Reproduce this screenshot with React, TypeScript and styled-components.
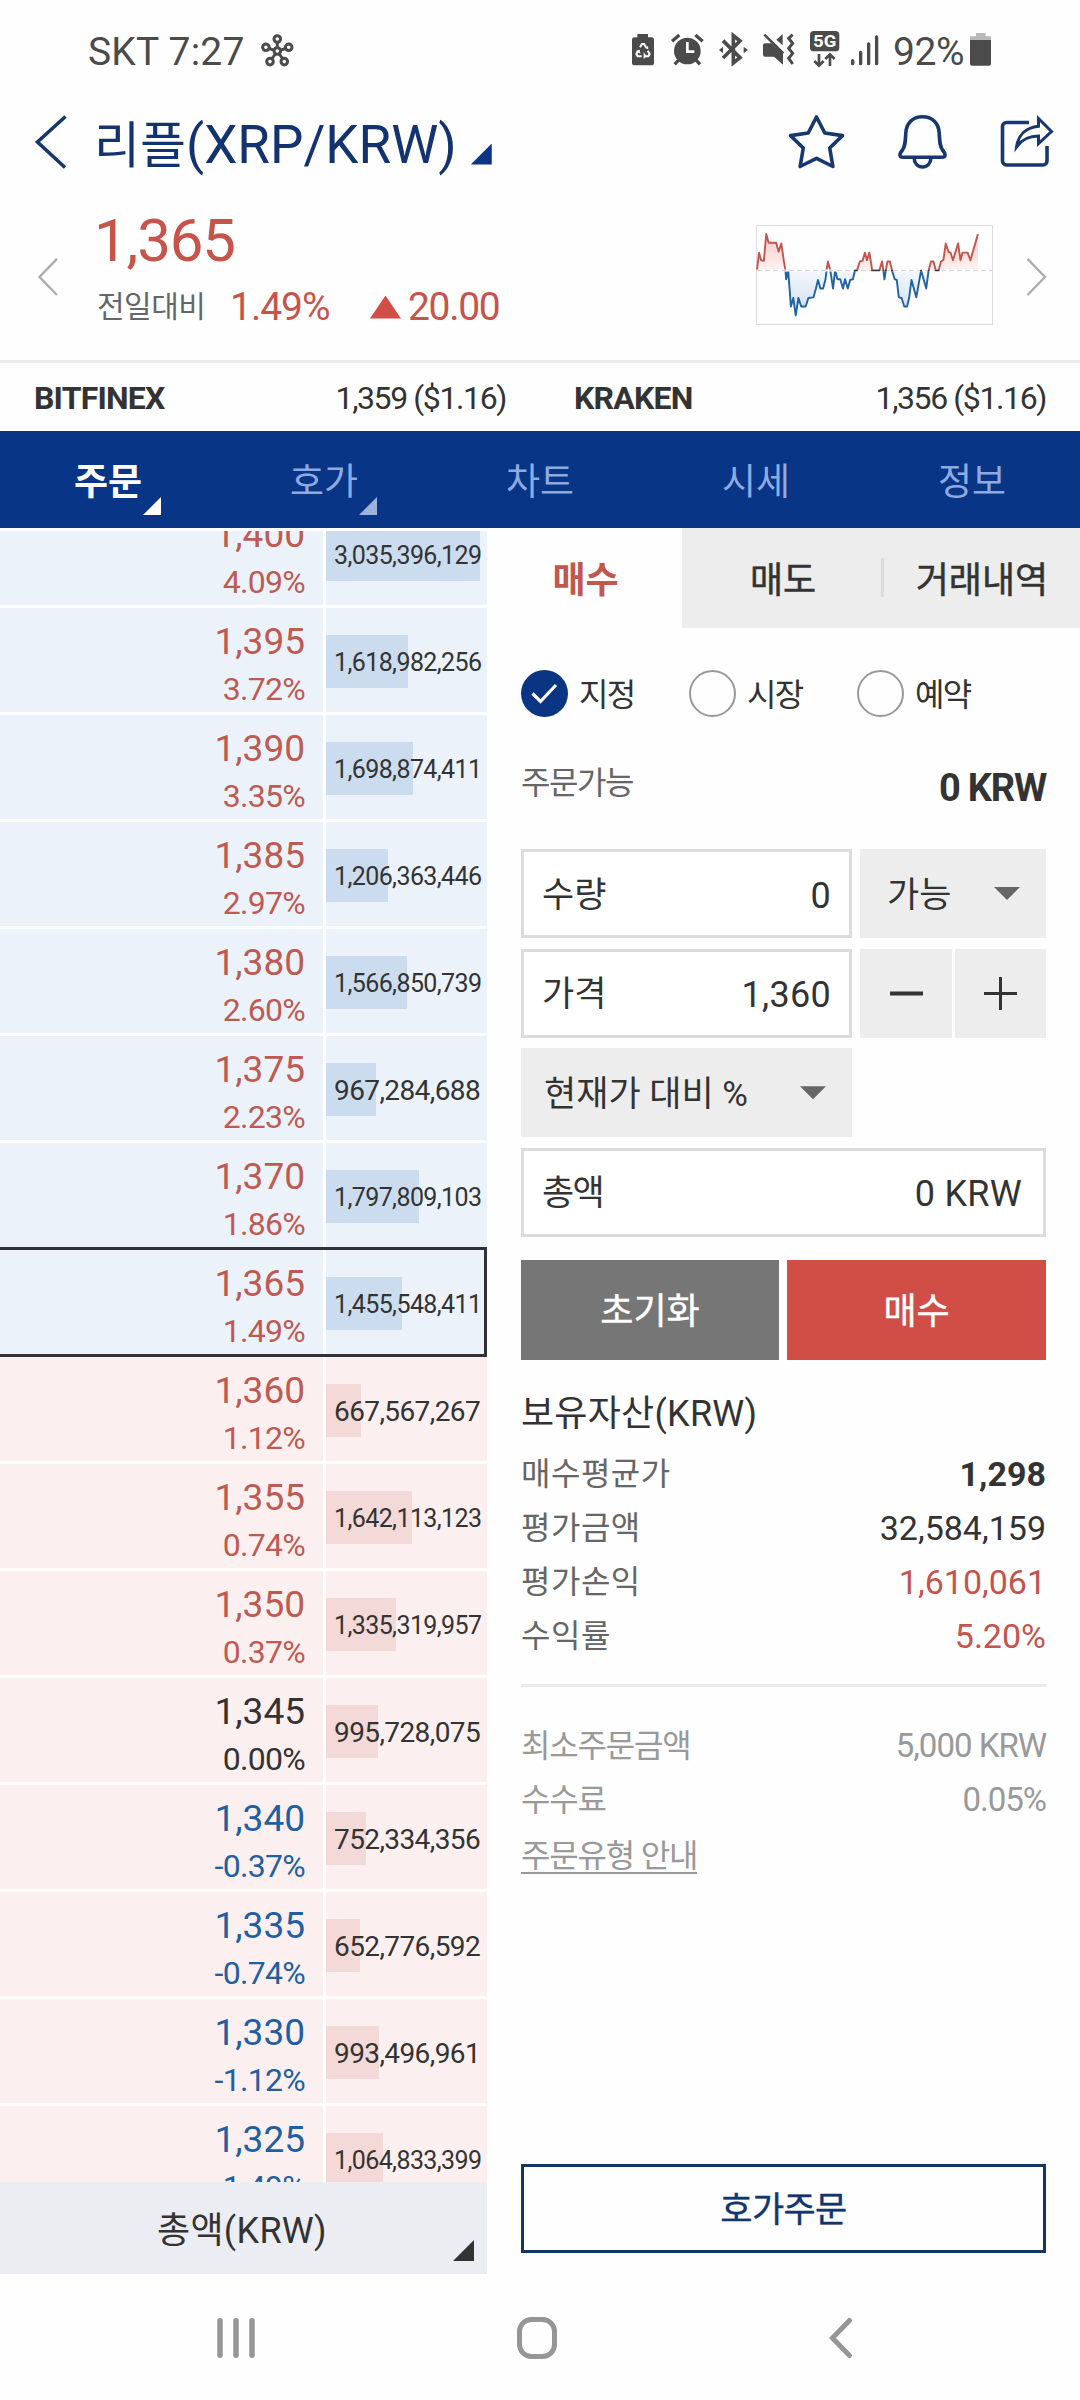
import React from "react";
import styled, { createGlobalStyle } from "styled-components";

const NAVY = "#0b3583";
const INK = "#333333";
const RED = "#c4554c";
const BLUE = "#1f5fa3";

const GlobalStyle = createGlobalStyle`
  * { box-sizing: border-box; }
  body {
    margin: 0;
    background: #fefefe;
    font-family: Roboto, "Noto Sans CJK KR", sans-serif;
    color: ${INK};
  }
  button {
    font: inherit;
    color: inherit;
    border: 0;
    padding: 0;
    background: none;
  }
`;

const Screen = styled.div`
  width: 1080px;
  height: 2400px;
  display: flex;
  flex-direction: column;
  overflow: hidden;
  white-space: nowrap;
`;

const Icon = styled.svg`
  display: block;
  flex: none;
  overflow: visible;
`;

/* ---------- status bar ---------- */

const StatusBar = styled.header`
  height: 104px;
  display: flex;
  align-items: center;
  padding: 0 89px 0 88px;
  font-size: 39px;
  line-height: 40px;
  color: #4b4b4b;
`;

const Carrier = styled.span`
  width: 173px;
  letter-spacing: 0.2px;
`;

const ClusterIcon = styled(Icon)`
  margin-top: -3px;
`;

const StatusIcons = styled.div`
  margin-left: auto;
  margin-top: -6px;
  display: flex;
  align-items: center;
`;

const StatusGlyph = styled(Icon)<{ $gap: number }>`
  margin-right: ${(p) => p.$gap}px;
  color: #4b4b4b;
`;

const BatteryLevel = styled.span`
  width: 77px;
  margin-top: 6px;
  letter-spacing: -0.4px;
`;

/* ---------- title bar ---------- */

const TitleBar = styled.div`
  height: 76px;
  display: flex;
  align-items: center;
  padding: 0 27px 0 35px;
  color: #17376f;
`;

const Title = styled.h1`
  margin: 6px 0 0 27px;
  font-size: 53px;
  line-height: 60px;
  font-weight: 400;
  color: #12336f;
`;

const TitleName = styled.span`
  font-size: 50px;
`;

const Corner = styled.i<{ $size: number; $color: string }>`
  display: block;
  flex: none;
  width: ${(p) => p.$size}px;
  height: ${(p) => p.$size}px;
  background: ${(p) => p.$color};
  clip-path: polygon(100% 0, 100% 100%, 0 100%);
`;

const TitleCorner = styled(Corner)`
  margin: 24px 0 0 14px;
`;

const TitleActions = styled.div`
  margin-left: auto;
  display: flex;
  align-items: center;
  gap: 54px;
`;

/* ---------- ticker ---------- */

const Ticker = styled.section`
  height: 180px;
  display: flex;
  align-items: flex-start;
  padding: 0 34px 0 38px;
`;

const Step = styled(Icon)`
  margin-top: 78px;
`;

const Quote = styled.div`
  margin-left: 36px;
  padding-top: 30px;
  color: #c7544a;
`;

const QuotePrice = styled.div`
  font-size: 60px;
  line-height: 61px;
  letter-spacing: -1.2px;
`;

const QuoteChange = styled.div`
  display: flex;
  align-items: center;
  margin: 14px 0 0 3px;
  height: 44px;
  font-size: 39px;
  line-height: 44px;
  letter-spacing: -1.3px;
`;

const ChangeLabel = styled.span`
  width: 133px;
  font-size: 30px;
  letter-spacing: -0.5px;
  color: #666;
`;

const ChangeRate = styled.span`
  width: 140px;
  letter-spacing: -1px;
`;

const UpMark = styled.i`
  width: 31px;
  height: 23px;
  margin-right: 7px;
  background: #d04e45;
  clip-path: polygon(50% 0, 100% 100%, 0 100%);
`;

const Spark = styled.div`
  width: 237px;
  height: 100px;
  margin: 45px 34px 0 auto;
  border: 1px solid #dcdcdc;
`;

/* ---------- other exchanges ---------- */

const Exchanges = styled.section`
  height: 71px;
  border-top: 3px solid #ebebeb;
  display: grid;
  grid-template-columns: 1fr 1fr;
  font-size: 32px;
  line-height: 40px;
`;

const Exchange = styled.div`
  display: flex;
  justify-content: space-between;
  align-items: center;
  padding: 2px 34px 0 34px;
`;

const ExchangeName = styled.b`
  letter-spacing: -0.8px;
`;

const ExchangePrice = styled.span`
  letter-spacing: -1.4px;
`;

/* ---------- main navigation ---------- */

const MainNav = styled.nav`
  height: 97px;
  display: grid;
  grid-template-columns: repeat(5, 1fr);
  background: #083585;
`;

const NavItem = styled.button<{ $active?: boolean }>`
  position: relative;
  font-size: 37px;
  line-height: 44px;
  padding-top: 6px;
  font-weight: ${(p) => (p.$active ? 700 : 400)};
  color: ${(p) => (p.$active ? "#ffffff" : "#8eaae0")};
`;

const NavCorner = styled(Corner)`
  position: absolute;
  left: 143px;
  top: 66px;
`;

/* ---------- body ---------- */

const Body = styled.main`
  height: 1746px;
  display: grid;
  grid-template-columns: 487px 1fr;
`;

const BookColumn = styled.section`
  display: flex;
  flex-direction: column;
  min-height: 0;
  height: 1746px;
`;

const BookClip = styled.div`
  margin-top: 3px;
  height: 1651px;
  overflow: hidden;
`;

const BookList = styled.div`
  margin-top: -30px;
  display: flex;
  flex-direction: column;
  gap: 3px;
`;

const BookRow = styled.div<{ $side: "ask" | "bid"; $current?: boolean }>`
  flex: none;
  height: 104px;
  display: grid;
  grid-template-columns: 323px 161px;
  column-gap: 3px;
  position: relative;
  --cell: ${(p) => (p.$side === "ask" ? "#ebf2fa" : "#fbf0ef")};
  --bar: ${(p) => (p.$side === "ask" ? "#ccdcef" : "#f3d9d7")};
  ${(p) =>
    p.$current &&
    `&::after {
      content: "";
      position: absolute;
      inset: -3px 0 -3px -3px;
      border: 3px solid #303236;
    }`}
`;

const PriceCell = styled.div<{ $tone: string }>`
  background: var(--cell);
  color: ${(p) => p.$tone};
  padding: 12px 18px 0 0;
  text-align: right;
`;

const Price = styled.div`
  font-size: 37px;
  line-height: 44px;
`;

const Rate = styled.div`
  font-size: 32px;
  letter-spacing: -0.7px;
  line-height: 36px;
  margin-top: 7px;
`;

const VolumeCell = styled.div`
  background: var(--cell);
  display: grid;
  align-items: center;
  padding-top: 3px;
`;

const VolumeBar = styled.div`
  grid-area: 1 / 1;
  height: 53px;
  background: var(--bar);
`;

const Volume = styled.span<{ $long: boolean }>`
  grid-area: 1 / 1;
  position: relative;
  padding: 3px 0 0 8px;
  font-size: ${(p) => (p.$long ? 25 : 28)}px;
  letter-spacing: -0.6px;
  line-height: 32px;
`;

const BookFooter = styled.button`
  height: 92px;
  width: 487px;
  background: #ecedf3;
  position: relative;
  padding: 5px 3px 0 0;
  font-size: 36px;
  letter-spacing: 0.3px;
  line-height: 44px;
`;

const FooterCorner = styled(Corner)`
  position: absolute;
  right: 13px;
  bottom: 13px;
`;

/* ---------- order panel ---------- */

const OrderPanel = styled.section`
  height: 1746px;
  display: flex;
  flex-direction: column;
`;

const OrderTabs = styled.div`
  height: 100px;
  display: grid;
  grid-template-columns: 195px 200px 198px;
`;

const OrderTab = styled.button<{ $active?: boolean; $divider?: boolean }>`
  display: flex;
  align-items: center;
  justify-content: center;
  position: relative;
  padding: 5px 0 0 2px;
  font-size: 36px;
  line-height: 44px;
  font-weight: ${(p) => (p.$active ? 700 : 400)};
  -webkit-text-stroke: ${(p) => (p.$active ? 0 : 0.5)}px currentColor;
  color: ${(p) => (p.$active ? "#c2574f" : INK)};
  background: ${(p) => (p.$active ? "transparent" : "#ededed")};
  ${(p) =>
    p.$divider &&
    `&::before {
      content: "";
      position: absolute;
      left: -1px;
      top: 30px;
      width: 3px;
      height: 39px;
      background: #dcdcdc;
    }`}
`;

const Form = styled.div`
  flex: 1;
  display: flex;
  flex-direction: column;
  padding: 0 34px 21px;
`;

const RadioRow = styled.div`
  margin-top: 42px;
  height: 47px;
  display: flex;
`;

const Radio = styled.label`
  width: 168px;
  display: flex;
  align-items: center;
  gap: 11px;
  font-size: 32px;
  line-height: 40px;
  letter-spacing: -1.6px;
`;

const RadioDot = styled.span<{ $checked?: boolean }>`
  width: 47px;
  height: 47px;
  border-radius: 50%;
  display: grid;
  place-items: center;
  border: ${(p) => (p.$checked ? "0" : "2.5px solid #999")};
  background: ${(p) => (p.$checked ? "#0a3583" : "transparent")};
`;

const RadioText = styled.span`
  padding-top: 2px;
`;

const AvailableRow = styled.div`
  margin-top: 48px;
  height: 40px;
  display: flex;
  justify-content: space-between;
  line-height: 40px;
`;

const AvailableLabel = styled.span`
  font-size: 32px;
  letter-spacing: -1.4px;
  color: #666;
  margin-top: -2px;
`;

const AvailableValue = styled.b`
  font-size: 38px;
  letter-spacing: -1.2px;
  margin-top: 3px;
`;

const Fields = styled.div`
  margin-top: 44px;
  display: grid;
  grid-template-columns: 331px 186px;
  grid-auto-rows: 89px;
  gap: 10.6px 8px;
`;

const Field = styled.div<{ $wide?: boolean }>`
  grid-column: ${(p) => (p.$wide ? "1 / 3" : "auto")};
  border: 3px solid #dcdcdc;
  background: #fff;
  display: flex;
  align-items: center;
  justify-content: space-between;
  padding: 4px ${(p) => (p.$wide ? 21 : 18)}px 0 18px;
  font-size: 36px;
  letter-spacing: 0.3px;
  line-height: 44px;
`;

const FieldLabel = styled.span<{ $tight?: boolean }>`
  font-size: 35px;
  letter-spacing: ${(p) => (p.$tight ? -1.6 : 0)}px;
`;

const Select = styled.button`
  background: #ededed;
  display: flex;
  align-items: center;
  justify-content: space-between;
  padding: 0 26px 0 23px;
  font-size: 35px;
  line-height: 44px;
`;

const SelectText = styled.span`
  padding-top: 5px;
`;

const Caret = styled.i`
  width: 26px;
  height: 13px;
  background: #666;
  clip-path: polygon(0 0, 100% 0, 50% 100%);
`;

const AvailableSelect = styled(Select)`
  padding-left: 27px;
`;

const Stepper = styled.div`
  display: grid;
  grid-template-columns: 92px 91px;
  gap: 3px;
`;

const StepButton = styled.button`
  background: #ededed;
  display: grid;
  place-items: center;
`;

const Actions = styled.div`
  margin-top: 23px;
  display: grid;
  grid-template-columns: 258px 259px;
  gap: 8px;
  height: 100px;
`;

const Action = styled.button<{ $bg: string }>`
  background: ${(p) => p.$bg};
  color: #fff;
  padding-top: 5px;
  font-size: 36px;
  line-height: 44px;
  -webkit-text-stroke: 0.4px currentColor;
`;

const Heading = styled.h2`
  margin: 29px 0 8px;
  font-size: 36px;
  letter-spacing: 0.25px;
  line-height: 50px;
  font-weight: 400;
`;

const Line = styled.div<{ $muted?: boolean }>`
  height: 54px;
  display: flex;
  justify-content: space-between;
  align-items: center;
  line-height: 44px;
  padding-top: ${(p) => (p.$muted ? 2 : 0)}px;
  font-size: ${(p) => (p.$muted ? 33 : 34)}px;
  letter-spacing: ${(p) => (p.$muted ? -1 : 0)}px;
  color: ${(p) => (p.$muted ? "#999" : INK)};
`;

const LineLabel = styled.span<{ $muted?: boolean }>`
  font-size: 32px;
  letter-spacing: ${(p) => (p.$muted ? -1.2 : 0.5)}px;
  color: ${(p) => (p.$muted ? "#999" : "#666")};
`;

const LineValue = styled.span<{ $tone?: string; $strong?: boolean }>`
  color: ${(p) => p.$tone ?? "inherit"};
  font-weight: ${(p) => (p.$strong ? 700 : 400)};
`;

const GuideLink = styled.a`
  font-size: 32px;
  letter-spacing: -1.2px;
  color: #999;
  height: 40px;
  border-bottom: 2px solid #999;
`;

const Divider = styled.hr`
  width: 100%;
  height: 3px;
  margin: 21px 0 31px;
  border: 0;
  background: #ebebeb;
`;

const BookOrderButton = styled.button`
  margin-top: auto;
  height: 89px;
  padding-top: 5px;
  border: 3px solid #17365f;
  color: #12356f;
  font-size: 35px;
  line-height: 44px;
  letter-spacing: -0.6px;
  -webkit-text-stroke: 0.4px currentColor;
`;

/* ---------- system navigation ---------- */

const SystemNav = styled.footer`
  flex: 1;
  display: flex;
  align-items: center;
  padding: 2px 0 0 217px;
`;

const HomeIcon = styled(Icon)`
  margin: 0 272px 0 262px;
`;

/* ---------- data ---------- */

type Level = {
  price: string;
  rate: string;
  volume: string;
  bar: number;
  side: "ask" | "bid";
  current?: boolean;
};

const levels: Level[] = [
  { price: "1,400", rate: "4.09%", volume: "3,035,396,129", bar: 154, side: "ask" },
  { price: "1,395", rate: "3.72%", volume: "1,618,982,256", bar: 82, side: "ask" },
  { price: "1,390", rate: "3.35%", volume: "1,698,874,411", bar: 87, side: "ask" },
  { price: "1,385", rate: "2.97%", volume: "1,206,363,446", bar: 62, side: "ask" },
  { price: "1,380", rate: "2.60%", volume: "1,566,850,739", bar: 81, side: "ask" },
  { price: "1,375", rate: "2.23%", volume: "967,284,688", bar: 50, side: "ask" },
  { price: "1,370", rate: "1.86%", volume: "1,797,809,103", bar: 93, side: "ask" },
  { price: "1,365", rate: "1.49%", volume: "1,455,548,411", bar: 76, side: "ask", current: true },
  { price: "1,360", rate: "1.12%", volume: "667,567,267", bar: 35, side: "bid" },
  { price: "1,355", rate: "0.74%", volume: "1,642,113,123", bar: 86, side: "bid" },
  { price: "1,350", rate: "0.37%", volume: "1,335,319,957", bar: 70, side: "bid" },
  { price: "1,345", rate: "0.00%", volume: "995,728,075", bar: 52, side: "bid" },
  { price: "1,340", rate: "-0.37%", volume: "752,334,356", bar: 40, side: "bid" },
  { price: "1,335", rate: "-0.74%", volume: "652,776,592", bar: 34, side: "bid" },
  { price: "1,330", rate: "-1.12%", volume: "993,496,961", bar: 53, side: "bid" },
  { price: "1,325", rate: "-1.49%", volume: "1,064,833,399", bar: 57, side: "bid" },
];

const toneOf = (rate: string) =>
  rate.startsWith("-") ? BLUE : rate === "0.00%" ? INK : "#bf5a52";

/* sparkline samples in a 686 x 298 space, the base line at y = 135 */
const spark =
  "0,135 1,124 6,81 12,104 20,106 27,24 34,51 56,51 63,78 71,53 78,104 83,135 85,162 91,135 99,245 106,219 113,272 121,219 129,245 142,245 150,219 165,217 172,190 178,164 185,190 193,190 200,162 203,135 207,108 214,135 222,190 228,135 235,162 243,162 251,190 257,162 265,190 272,164 280,162 286,135 292,135 300,108 308,106 315,81 321,104 328,81 334,119 336,135 357,135 365,108 369,135 372,162 376,135 381,108 388,108 394,135 402,162 408,164 414,217 422,219 430,245 438,245 444,219 451,164 465,217 479,135 494,190 501,135 508,108 515,108 522,135 530,135 537,108 544,104 551,53 559,79 565,81 572,104 587,53 594,104 600,81 615,81 623,104 645,24";

function Sparkline() {
  const line = { fill: "none", strokeWidth: 1.9, vectorEffect: "non-scaling-stroke" as const, strokeLinejoin: "round" as const };
  return (
    <Icon width="235" height="98" viewBox="0 0 686 298" preserveAspectRatio="none">
      <defs>
        <clipPath id="above"><rect x="-4" y="0" width="700" height="132" /></clipPath>
        <clipPath id="below"><rect x="-4" y="138" width="700" height="160" /></clipPath>
        <clipPath id="level"><rect x="250" y="132" width="300" height="6" /></clipPath>
        <linearGradient id="warm" x1="0" y1="24" x2="0" y2="135" gradientUnits="userSpaceOnUse">
          <stop offset="0" stopColor="#f5c9c5" /><stop offset="1" stopColor="#fdf3f2" />
        </linearGradient>
        <linearGradient id="cool" x1="0" y1="135" x2="0" y2="272" gradientUnits="userSpaceOnUse">
          <stop offset="0" stopColor="#f4f7fc" /><stop offset="1" stopColor="#cfddf0" />
        </linearGradient>
      </defs>
      <polygon points={`${spark} 645,135`} fill="url(#warm)" clipPath="url(#above)" />
      <polygon points={`${spark} 645,135`} fill="url(#cool)" clipPath="url(#below)" />
      <line x1="0" x2="686" y1="135" y2="135" stroke="#d4d4d4" strokeWidth="1" strokeDasharray="5 3" vectorEffect="non-scaling-stroke" />
      <polyline points={spark} stroke="#c4554c" clipPath="url(#above)" {...line} />
      <polyline points={spark} stroke="#1f62a6" clipPath="url(#below)" {...line} />
      <polyline points={spark} stroke="#333" clipPath="url(#level)" {...line} />
    </Icon>
  );
}

function StatusArea() {
  return (
    <StatusBar>
      <Carrier>SKT 7:27</Carrier>
      <ClusterIcon width="33" height="33" viewBox="0 0 33 33" fill="none" stroke="#4b4b4b" strokeWidth="3">
        <path d="M16.3 8.5v5M8 14.5l5 1.6M24.6 14.5l-5 1.6M11 24.6l3.3-4.6M21.6 24.6L18.3 20" />
        <circle cx="16.3" cy="17" r="3.3" />
        <circle cx="16.3" cy="5" r="3.3" />
        <circle cx="4.9" cy="13.3" r="3.3" />
        <circle cx="27.7" cy="13.3" r="3.3" />
        <circle cx="9" cy="27.6" r="3.3" />
        <circle cx="23.3" cy="27.6" r="3.3" />
      </ClusterIcon>
      <StatusIcons>
        <StatusGlyph $gap={17} width="22" height="38" viewBox="35 30 66 114">
          <path fill="currentColor" d="M51 42h32v10h10a8 8 0 0 1 8 8v68a8 8 0 0 1-8 8H43a8 8 0 0 1-8-8V60a8 8 0 0 1 8-8h8z" />
          <path fill="none" stroke="#fff" strokeWidth="6" d="M59 82l6-10h6l6 10M82 92l6 10-4 7H73M64 109H52l-4-7 6-10" />
          <path fill="#fff" d="M70 96l9 13-9 8zM46 93l12-4 2 12zM73 84l10-6 1 10z" />
        </StatusGlyph>
        <StatusGlyph $gap={16} width="32.7" height="38" viewBox="152 30 98 114">
          <circle cx="201" cy="93" r="40" fill="currentColor" />
          <path fill="none" stroke="currentColor" strokeWidth="10" d="M155 64l22-19M247 64l-22-19M176 119l-13 14M226 119l13 14" />
          <path fill="none" stroke="#fff" strokeWidth="8" d="M201 66v29h21" />
        </StatusGlyph>
        <StatusGlyph $gap={15} width="29" height="38" viewBox="297 30 87 114">
          <path fill="none" stroke="currentColor" strokeWidth="11" d="M309 62l51 51-20 16V47l20 16-51 51" />
          <path fill="currentColor" d="M297 90l12-10v20zM384 90l-13-10v20z" />
        </StatusGlyph>
        <StatusGlyph $gap={16} width="31" height="38" viewBox="430 30 93 114">
          <path fill="currentColor" d="M435 70h20l35 32v32l-27-24h-27a6 6 0 0 1-6-6V76a6 6 0 0 1 6-6zM489 42v34l-19-17z" />
          <path stroke="currentColor" strokeWidth="8" d="M434 44l57 56" />
          <path fill="none" stroke="currentColor" strokeWidth="9" d="M519 44l-12 11 12 15-12 15 12 15-12 15 12 17" />
        </StatusGlyph>
        <StatusGlyph $gap={11.5} width="29.3" height="38" viewBox="570 30 88 114">
          <rect x="570" y="33" width="88" height="61" rx="11" fill="currentColor" />
          <text x="614" y="82" fill="#fff" fontSize="52" fontWeight="700" textAnchor="middle" textLength="70" lengthAdjust="spacingAndGlyphs">5G</text>
          <path fill="none" stroke="currentColor" strokeWidth="8" d="M597 102v33M583 123l14 14 14-14M630 138v-33M616 117l14-14 14 14" />
        </StatusGlyph>
        <StatusGlyph $gap={14.5} width="27.3" height="38" viewBox="692 30 82 114">
          <path stroke="currentColor" strokeWidth="10" strokeLinecap="round" d="M697 122v9M721 97v34M745 72v59M769 51v80" />
        </StatusGlyph>
        <BatteryLevel>92%</BatteryLevel>
        <StatusGlyph $gap={0} width="21" height="38" viewBox="1050 30 63 114">
          <path fill="#b9b9b9" d="M1068 39h29v10h16v12h-63V49h18z" />
          <path fill="currentColor" d="M1050 60h63v71a6 6 0 0 1-6 6h-51a6 6 0 0 1-6-6z" />
        </StatusGlyph>
      </StatusIcons>
    </StatusBar>
  );
}

export default function App() {
  return (
    <>
      <GlobalStyle />
      <Screen>
        <StatusArea />

        <TitleBar>
          <Icon width="32" height="54" viewBox="0 0 32 54" fill="none" stroke="currentColor" strokeWidth="3.6">
            <path d="M30.5 1.5L2.5 27l27.5 25.5" />
          </Icon>
          <Title><TitleName>리플</TitleName>(XRP/KRW)</Title>
          <TitleCorner $size={21} $color={NAVY} />
          <TitleActions>
            <Icon width="55" height="54" viewBox="0 0 55 54" fill="none" stroke="currentColor" strokeWidth="3.6" strokeLinejoin="round">
              <path d="M27.5 2l8.3 16 17.7 2.6L40.7 33l3.2 18.5-16.4-8.2-16.4 8.2L14.3 33 1.5 20.6 19.2 18z" />
            </Icon>
            <Icon width="49" height="54" viewBox="0 0 49 54" fill="none" stroke="currentColor" strokeWidth="3.6" strokeLinejoin="round">
              <path d="M24.5 1.7C14 1.7 8.2 9 7.8 18c-.5 9-.6 13.5-3.3 17C2 38 1.7 39 2 40.5c.3 1.5 1.5 1.8 3 1.8h39c1.5 0 2.7-.3 3-1.8.3-1.5 0-2.500-2.500-5.500-2.700-3.500-2.800-8-3.300-17C40.800 9 35 1.700 24.500 1.700z" />
              <path d="M16 42.500c.3 6 4 9.500 8.500 9.500s8.200-3.500 8.500-9.500" />
            </Icon>
            <Icon width="52" height="54" viewBox="0 0 52 54" fill="none" stroke="currentColor" strokeWidth="3.6">
              <path d="M28 7.500H5.500a4 4 0 0 0-4 4V46a4 4 0 0 0 4 4h36.500a4 4 0 0 0 4-4V31" />
              <path strokeWidth="3" d="M37.500 3.500L50.500 16.500 37.500 28.500v-7.500C27 21 21 24.500 15.500 32c1.500-12 9.500-19.500 22-20.800z" />
            </Icon>
          </TitleActions>
        </TitleBar>

        <Ticker>
          <Step width="20" height="38" viewBox="0 0 20 38" fill="none" stroke="#adadad" strokeWidth="2.4">
            <path d="M19 .8L1.500 19 19 37" />
          </Step>
          <Quote>
            <QuotePrice>1,365</QuotePrice>
            <QuoteChange>
              <ChangeLabel>전일대비</ChangeLabel>
              <ChangeRate>1.49%</ChangeRate>
              <UpMark />
              20.00
            </QuoteChange>
          </Quote>
          <Spark><Sparkline /></Spark>
          <Step width="19" height="38" viewBox="0 0 19 38" fill="none" stroke="#adadad" strokeWidth="2.4">
            <path d="M.5 .8L18 19 .5 37" />
          </Step>
        </Ticker>

        <Exchanges>
          <Exchange>
            <ExchangeName>BITFINEX</ExchangeName>
            <ExchangePrice>1,359 ($1.16)</ExchangePrice>
          </Exchange>
          <Exchange>
            <ExchangeName>KRAKEN</ExchangeName>
            <ExchangePrice>1,356 ($1.16)</ExchangePrice>
          </Exchange>
        </Exchanges>

        <MainNav>
          <NavItem $active>주문<NavCorner $size={18} $color="#ffffff" /></NavItem>
          <NavItem>호가<NavCorner $size={18} $color="#9fb3da" /></NavItem>
          <NavItem>차트</NavItem>
          <NavItem>시세</NavItem>
          <NavItem>정보</NavItem>
        </MainNav>

        <Body>
          <BookColumn>
            <BookClip>
              <BookList>
                {levels.map((l) => (
                  <BookRow key={l.price} $side={l.side} $current={l.current}>
                    <PriceCell $tone={toneOf(l.rate)}>
                      <Price>{l.price}</Price>
                      <Rate>{l.rate}</Rate>
                    </PriceCell>
                    <VolumeCell>
                      <VolumeBar style={{ width: l.bar }} />
                      <Volume $long={l.volume.length > 11}>{l.volume}</Volume>
                    </VolumeCell>
                  </BookRow>
                ))}
              </BookList>
            </BookClip>
            <BookFooter>
              총액(KRW)
              <FooterCorner $size={21} $color={INK} />
            </BookFooter>
          </BookColumn>

          <OrderPanel>
            <OrderTabs>
              <OrderTab $active>매수</OrderTab>
              <OrderTab>매도</OrderTab>
              <OrderTab $divider>거래내역</OrderTab>
            </OrderTabs>
            <Form>
              <RadioRow>
                <Radio>
                  <RadioDot $checked>
                    <Icon width="27" height="22" viewBox="0 0 27 22" fill="none" stroke="#fff" strokeWidth="3.2">
                      <path d="M1.500 10.500l8 8L25 2" />
                    </Icon>
                  </RadioDot>
                  <RadioText>지정</RadioText>
                </Radio>
                <Radio><RadioDot /><RadioText>시장</RadioText></Radio>
                <Radio><RadioDot /><RadioText>예약</RadioText></Radio>
              </RadioRow>

              <AvailableRow>
                <AvailableLabel>주문가능</AvailableLabel>
                <AvailableValue>0 KRW</AvailableValue>
              </AvailableRow>

              <Fields>
                <Field><FieldLabel>수량</FieldLabel>0</Field>
                <AvailableSelect><SelectText>가능</SelectText><Caret /></AvailableSelect>
                <Field><FieldLabel>가격</FieldLabel>1,360</Field>
                <Stepper>
                  <StepButton>
                    <Icon width="33" height="33" viewBox="0 0 33 33"><path stroke={INK} strokeWidth="4" d="M0 16.500h33" /></Icon>
                  </StepButton>
                  <StepButton>
                    <Icon width="33" height="33" viewBox="0 0 33 33"><path stroke={INK} strokeWidth="3" d="M0 16.500h33M16.500 0v33" /></Icon>
                  </StepButton>
                </Stepper>
                <Select><SelectText>현재가 대비 %</SelectText><Caret /></Select>
                <Field $wide><FieldLabel $tight>총액</FieldLabel>0 KRW</Field>
              </Fields>

              <Actions>
                <Action $bg="#767676">초기화</Action>
                <Action $bg="#d04e45">매수</Action>
              </Actions>

              <Heading>보유자산(KRW)</Heading>
              <Line><LineLabel>매수평균가</LineLabel><LineValue $strong>1,298</LineValue></Line>
              <Line><LineLabel>평가금액</LineLabel><LineValue>32,584,159</LineValue></Line>
              <Line><LineLabel>평가손익</LineLabel><LineValue $tone={RED}>1,610,061</LineValue></Line>
              <Line><LineLabel>수익률</LineLabel><LineValue $tone={RED}>5.20%</LineValue></Line>
              <Divider />
              <Line $muted><LineLabel $muted>최소주문금액</LineLabel><LineValue>5,000 KRW</LineValue></Line>
              <Line $muted><LineLabel $muted>수수료</LineLabel><LineValue>0.05%</LineValue></Line>
              <Line $muted><GuideLink>주문유형 안내</GuideLink></Line>

              <BookOrderButton>호가주문</BookOrderButton>
            </Form>
          </OrderPanel>
        </Body>

        <SystemNav>
          <Icon width="38" height="40" viewBox="0 0 38 40" stroke="#969696" strokeWidth="5.5" strokeLinecap="round">
            <path d="M3 2.800v34.400M19 2.800v34.400M35 2.800v34.400" />
          </Icon>
          <HomeIcon width="40" height="42" viewBox="0 0 40 42" fill="none" stroke="#969696" strokeWidth="5">
            <rect x="2.5" y="2.5" width="35" height="37" rx="12" />
          </HomeIcon>
          <Icon width="23" height="40" viewBox="0 0 23 40" fill="none" stroke="#969696" strokeWidth="5" strokeLinecap="round">
            <path d="M20.500 2.500L3.500 20l17 17.500" />
          </Icon>
        </SystemNav>
      </Screen>
    </>
  );
}
